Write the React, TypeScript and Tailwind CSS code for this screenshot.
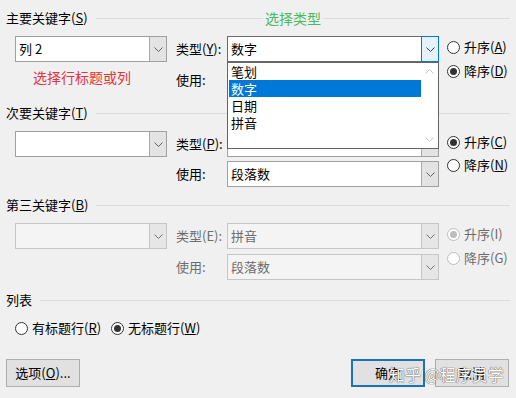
import React from "react";

const FONT = '"Noto Sans CJK SC", "Noto Sans", sans-serif';

function Chevron({ color = "#5f5f5f" }: { color?: string }) {
  return (
    <svg width="9" height="5" viewBox="0 0 9 5">
      <path d="M0.5 0.5 L4.5 4.5 L8.5 0.5" fill="none" stroke={color} strokeWidth="1" />
    </svg>
  );
}

function ChevronUp({ color = "#c4c4c4" }: { color?: string }) {
  return (
    <svg width="9" height="5" viewBox="0 0 9 5">
      <path d="M0.5 4.5 L4.5 0.5 L8.5 4.5" fill="none" stroke={color} strokeWidth="1" />
    </svg>
  );
}

function Combo({
  className,
  text,
  disabled,
  focused,
  children,
}: {
  className: string;
  text?: string;
  disabled?: boolean;
  focused?: boolean;
  children?: React.ReactNode;
}) {
  return (
    <div
      className={`relative flex h-[26px] border ${
        disabled ? "border-[#c6c6c6] bg-[#f4f4f4]" : focused ? "border-[#6b6b6b] bg-white" : "border-[#a0a0a0] bg-white"
      } ${className}`}
    >
      <div
        className={`flex-1 pl-[3px] text-[13px] leading-[24px] ${disabled ? "text-[#6d6d6d]" : "text-black"}`}
      >
        {text}
      </div>
      {focused ? (
        <div className="-my-px -mr-px flex w-[18px] items-center justify-center border border-[#0078d7] bg-[#e5f1fb]">
          <Chevron color="#3c3c3c" />
        </div>
      ) : (
        <div
          className={`flex w-[17px] items-center justify-center border-l ${
            disabled ? "border-[#c6c6c6] bg-[#e6e6e6]" : "border-[#a8a8a8] bg-[#e3e3e3]"
          }`}
        >
          <Chevron color={disabled ? "#707070" : "#5f5f5f"} />
        </div>
      )}
      {children}
    </div>
  );
}

function Radio({
  checked,
  disabled,
  children,
}: {
  checked?: boolean;
  disabled?: boolean;
  children: React.ReactNode;
}) {
  return (
    <div className="flex h-[22px] items-center">
      <span
        className={`flex h-[13px] w-[13px] items-center justify-center rounded-full border bg-white ${
          disabled ? "border-[#bcbcbc]" : "border-[#333333]"
        }`}
      >
        {checked && (
          <span className={`h-[7px] w-[7px] rounded-full ${disabled ? "bg-[#bcbcbc]" : "bg-[#333333]"}`} />
        )}
      </span>
      <span className={`ml-[4px] text-[13px] leading-[18px] ${disabled ? "text-[#6d6d6d]" : "text-black"}`}>
        {children}
      </span>
    </div>
  );
}

function Header({ children }: { children: React.ReactNode }) {
  return (
    <div className="flex h-4 items-center">
      <span className="text-[13px] leading-4 text-black">{children}</span>
      <div className="ml-2 h-px flex-1 bg-[#dcdcdc]" />
    </div>
  );
}

function Label({ children, disabled }: { children: React.ReactNode; disabled?: boolean }) {
  return (
    <span className={`w-[51px] text-[13px] leading-[18px] ${disabled ? "text-[#6d6d6d]" : "text-black"}`}>
      {children}
    </span>
  );
}

function DropList() {
  const items = ["笔划", "数字", "日期", "拼音"];
  return (
    <div className="absolute left-[-1px] top-[25px] z-10 flex h-[87px] w-[212px] border border-[#646464] bg-white">
      <div className="flex-1 pl-px pt-0">
        {items.map((it) => (
          <div
            key={it}
            className={`h-[17px] pl-[2px] text-[13px] leading-[17px] ${
              it === "数字" ? "bg-[#0078d7] text-white" : "text-black"
            }`}
          >
            {it}
          </div>
        ))}
      </div>
      <div className="flex w-[17px] flex-col items-center justify-between bg-white py-[6px]">
        <ChevronUp />
        <Chevron color="#c4c4c4" />
      </div>
    </div>
  );
}

function Button({ children, primary }: { children: React.ReactNode; primary?: boolean }) {
  return (
    <div
      className={`flex h-[28px] w-[74px] items-center justify-center bg-[#e1e1e1] text-[13px] text-black ${
        primary ? "border-2 border-[#1a72b8]" : "border border-[#adadad]"
      }`}
    >
      {children}
    </div>
  );
}

export default function App() {
  return (
    <div
      className="relative h-[398px] w-[516px] overflow-hidden bg-[#f0f0f0] px-[6px] pt-[10px] text-black"
      style={{ fontFamily: FONT }}
    >
      {/* Section 1 */}
      <Header>
        主要关键字(<u>S</u>)
      </Header>
      <div className="mt-[10px] flex">
        <div className="w-[170px] pl-[9px]">
          <Combo className="w-[152px]" text="列 2" />
          <div className="ml-[18px] mt-[6px] text-[14px] leading-[18px] text-[#e3343c]">选择行标题或列</div>
        </div>
        <div className="flex flex-col gap-[5px]">
          <div className="flex items-center">
            <Label>
              类型(<u>Y</u>):
            </Label>
            <Combo className="w-[212px]" text="数字" focused>
              <DropList />
            </Combo>
          </div>
          <div className="flex items-center">
            <Label>使用:</Label>
            <Combo className="w-[212px]" text="段落数" />
          </div>
        </div>
        <div className="ml-[8px] flex flex-col gap-[2px]">
          <Radio>
            升序(<u>A</u>)
          </Radio>
          <Radio checked>
            降序(<u>D</u>)
          </Radio>
        </div>
      </div>

      {/* Section 2 */}
      <div className="mt-[12px]">
        <Header>
          次要关键字(<u>T</u>)
        </Header>
      </div>
      <div className="mt-[10px] flex">
        <div className="w-[170px] pl-[9px]">
          <Combo className="w-[152px]" text="" />
        </div>
        <div className="flex flex-col gap-[4px]">
          <div className="flex items-center">
            <Label>
              类型(<u>P</u>):
            </Label>
            <Combo className="w-[212px]" text="" />
          </div>
          <div className="flex items-center">
            <Label>使用:</Label>
            <Combo className="w-[212px]" text="段落数" />
          </div>
        </div>
        <div className="ml-[8px] flex flex-col gap-[1px]">
          <Radio checked>
            升序(<u>C</u>)
          </Radio>
          <Radio>
            降序(<u>N</u>)
          </Radio>
        </div>
      </div>

      {/* Section 3 */}
      <div className="mt-[10px]">
        <Header>
          第三关键字(<u>B</u>)
        </Header>
      </div>
      <div className="mt-[10px] flex">
        <div className="w-[170px] pl-[9px]">
          <Combo className="w-[152px]" text="" disabled />
        </div>
        <div className="flex flex-col gap-[5px]">
          <div className="flex items-center">
            <Label disabled>类型(E):</Label>
            <Combo className="w-[212px]" text="拼音" disabled />
          </div>
          <div className="flex items-center">
            <Label disabled>使用:</Label>
            <Combo className="w-[212px]" text="段落数" disabled />
          </div>
        </div>
        <div className="ml-[8px] flex flex-col gap-[2px]">
          <Radio checked disabled>
            升序(I)
          </Radio>
          <Radio disabled>降序(G)</Radio>
        </div>
      </div>

      {/* Section 4 */}
      <div className="mt-[12px]">
        <Header>列表</Header>
      </div>
      <div className="mt-[9px] flex pl-[9px]">
        <Radio>
          有标题行(<u>R</u>)
        </Radio>
        <div className="ml-[10px]">
          <Radio checked>
            无标题行(<u>W</u>)
          </Radio>
        </div>
      </div>

      {/* Buttons */}
      <div className="mt-[20px] flex items-center">
        <Button>
          选项(<u>O</u>)...
        </Button>
        <div className="ml-auto flex gap-[10px] pr-px">
          <Button primary>确定</Button>
          <Button>取消</Button>
        </div>
      </div>

      {/* Annotation: green */}
      <div className="absolute left-[263px] top-[8px] bg-[#f0f0f0] px-[2px] text-[14px] leading-[20px] text-[#4cba5c]">
        选择类型
      </div>

      {/* Watermark */}
      <div className="absolute left-[389px] top-[362px] text-[16px] leading-[24px] text-white [text-shadow:0_0_1px_#4a4a4a,0_0_1px_#4a4a4a]">
        知乎 @程序员学
      </div>
    </div>
  );
}
